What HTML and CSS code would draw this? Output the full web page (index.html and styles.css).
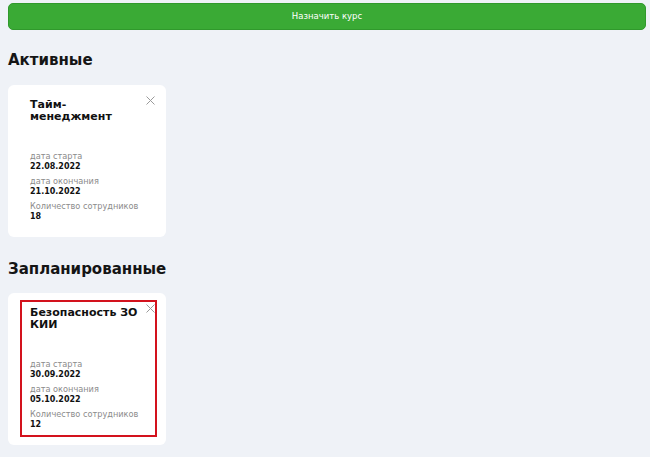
FILE: index.html
```html
<!DOCTYPE html>
<html lang="ru">
<head>
<meta charset="utf-8">
<title>Курсы</title>
<link rel="stylesheet" href="styles.css">
</head>
<body>
<div class="page">
  <button class="assign-btn" type="button">Назначить курс</button>

  <section class="section">
    <h2 class="section-title">Активные</h2>
    <div class="cards">
      <article class="card">
        <svg class="card-close" viewBox="0 0 9 9" width="9" height="9" aria-hidden="true"><path d="M0.5 0.5L8.5 8.5M8.5 0.5L0.5 8.5"/></svg>
        <div class="card-inner">
          <h3 class="card-title">Тайм-<br>менеджмент</h3>
          <div class="card-fields">
            <div class="field"><div class="field-label">дата старта</div><div class="field-value">22.08.2022</div></div>
            <div class="field"><div class="field-label">дата окончания</div><div class="field-value">21.10.2022</div></div>
            <div class="field"><div class="field-label">Количество сотрудников</div><div class="field-value">18</div></div>
          </div>
        </div>
      </article>
    </div>
  </section>

  <section class="section">
    <h2 class="section-title">Запланированные</h2>
    <div class="cards">
      <article class="card">
        <svg class="card-close" viewBox="0 0 9 9" width="9" height="9" aria-hidden="true"><path d="M0.5 0.5L8.5 8.5M8.5 0.5L0.5 8.5"/></svg>
        <div class="card-inner card-inner--selected">
          <h3 class="card-title">Безопасность ЗО<br>КИИ</h3>
          <div class="card-fields">
            <div class="field"><div class="field-label">дата старта</div><div class="field-value">30.09.2022</div></div>
            <div class="field"><div class="field-label">дата окончания</div><div class="field-value">05.10.2022</div></div>
            <div class="field"><div class="field-label">Количество сотрудников</div><div class="field-value">12</div></div>
          </div>
        </div>
      </article>
    </div>
  </section>
</div>
</body>
</html>
```

FILE: styles.css
```css
* { box-sizing: border-box; }

html, body {
  margin: 0;
  background: #eff2f7;
}

body {
  font-family: "DejaVu Sans", "Noto Sans", sans-serif;
  color: #141414;
}

.page {
  padding: 3px 4px 0 8px;
}

.assign-btn {
  display: block;
  width: 100%;
  height: 27px;
  margin: 0;
  padding: 0;
  border: 1px solid #30992c;
  border-radius: 5px;
  background: #3aaa35;
  color: #ffffff;
  font-family: inherit;
  font-size: 8.5px;
  line-height: 25px;
  text-align: center;
}

.section {
  margin-top: 21px;
}

.section-title {
  margin: 0 0 15.5px;
  font-size: 15px;
  line-height: 18px;
  font-weight: bold;
  color: #151515;
}

.cards {
  display: flex;
  gap: 12px;
  padding-bottom: 2px;
}

.card {
  position: relative;
  width: 158px;
  height: 152px;
  padding: 7px 9px 8px 12px;
  background: #ffffff;
  border-radius: 6px;
}

.card-close {
  position: absolute;
  top: 11px;
  right: 11px;
  fill: none;
  stroke: #9a9a9a;
  stroke-width: 1;
}

.card-inner {
  display: flex;
  flex-direction: column;
  height: 137px;
  padding: 5px 6px 5px 8px;
  border: 2px solid transparent;
}

.card-inner--selected {
  border-color: #d3121d;
}

.card-title {
  margin: 0;
  font-size: 11px;
  line-height: 12px;
  font-weight: bold;
  color: #111111;
}

.card-fields {
  margin-top: auto;
  display: flex;
  flex-direction: column;
  gap: 4px;
}

.field-label {
  font-size: 8.2px;
  line-height: 10px;
  color: #8b8b8b;
}

.field-value {
  font-size: 8px;
  line-height: 11px;
  font-weight: bold;
  color: #111111;
}
```
